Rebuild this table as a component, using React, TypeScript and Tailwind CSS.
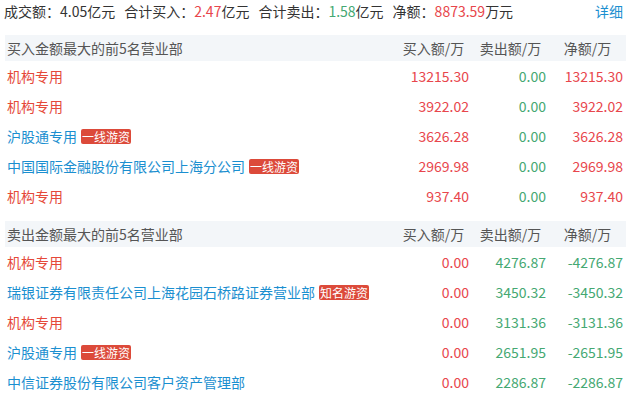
import React from 'react';

type Row = {
  name: string;
  tag?: string;
  buy: string;
  sell: string;
  net: string;
  org?: boolean;
};

const buyRows: Row[] = [
  { name: '机构专用', buy: '13215.30', sell: '0.00', net: '13215.30', org: true },
  { name: '机构专用', buy: '3922.02', sell: '0.00', net: '3922.02', org: true },
  { name: '沪股通专用', tag: '一线游资', buy: '3626.28', sell: '0.00', net: '3626.28' },
  { name: '中国国际金融股份有限公司上海分公司', tag: '一线游资', buy: '2969.98', sell: '0.00', net: '2969.98' },
  { name: '机构专用', buy: '937.40', sell: '0.00', net: '937.40', org: true },
];

const sellRows: Row[] = [
  { name: '机构专用', buy: '0.00', sell: '4276.87', net: '-4276.87', org: true },
  { name: '瑞银证券有限责任公司上海花园石桥路证券营业部', tag: '知名游资', buy: '0.00', sell: '3450.32', net: '-3450.32' },
  { name: '机构专用', buy: '0.00', sell: '3131.36', net: '-3131.36', org: true },
  { name: '沪股通专用', tag: '一线游资', buy: '0.00', sell: '2651.95', net: '-2651.95' },
  { name: '中信证券股份有限公司客户资产管理部', buy: '0.00', sell: '2286.87', net: '-2286.87' },
];

const RED = 'text-[#e8464c]';
const GREEN = 'text-[#45a872]';

const Section = ({ title, rows }: { title: string; rows: Row[] }) => (
  <div className="flex flex-col">
    <div className="flex h-[26px] items-center bg-[#f3f6f9] text-[#555]">
      <div className="flex-1 pl-[2px]">{title}</div>
      <div className="w-[77px] text-center">买入额/万</div>
      <div className="w-[77px] text-center">卖出额/万</div>
      <div className="w-[77px] text-center">净额/万</div>
    </div>
    {rows.map((row, index) => {
      const negative = row.net.startsWith('-');
      return (
        <div key={index} className="flex h-[30px] items-center">
          <div className="flex flex-1 items-center pl-[2px]">
            <span className={row.org ? 'text-[#e5493a]' : 'text-[#1b8fd0]'}>{row.name}</span>
            {row.tag && (
              <span className="ml-[4px] rounded-[2px] bg-[#dc4a3a] px-[1px] text-[12px] leading-[15px] text-white">
                {row.tag}
              </span>
            )}
          </div>
          <div className={`w-[77px] pr-[3px] text-right ${RED}`}>{row.buy}</div>
          <div className={`w-[77px] pr-[3px] text-right ${GREEN}`}>{row.sell}</div>
          <div className={`w-[77px] pr-[3px] text-right ${negative ? GREEN : RED}`}>{row.net}</div>
        </div>
      );
    })}
  </div>
);

const App = () => {
  return (
    <div
      className="h-[398px] w-[631px] overflow-hidden bg-white text-[14px] text-[#333]"
      style={{ fontFamily: '"Noto Sans CJK SC", "Noto Sans", sans-serif' }}
    >
      <div className="flex h-[22px] items-center justify-between pl-[4px] pr-[8px]">
        <div className="flex gap-[9px]">
          <span>
            成交额：4.05亿元
          </span>
          <span>
            合计买入：<span className={RED}>2.47</span>亿元
          </span>
          <span>
            合计卖出：<span className={GREEN}>1.58</span>亿元
          </span>
          <span>
            净额：<span className={RED}>8873.59</span>万元
          </span>
        </div>
        <a href="#" className="text-[#1b8fd0]">
          详细
        </a>
      </div>
      <div className="mx-[5px] flex flex-col gap-[10px] pt-[13px]">
        <Section title="买入金额最大的前5名营业部" rows={buyRows} />
        <Section title="卖出金额最大的前5名营业部" rows={sellRows} />
      </div>
    </div>
  );
};

export default App;
